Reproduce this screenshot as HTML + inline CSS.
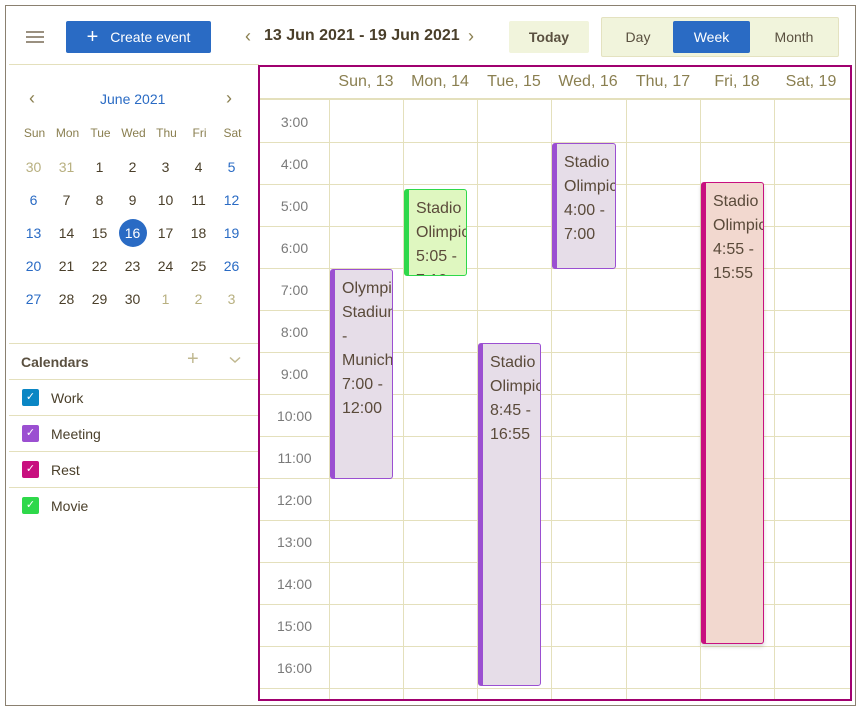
<!DOCTYPE html>
<html><head><meta charset="utf-8"><style>
*{box-sizing:border-box;margin:0;padding:0}
body{width:860px;height:710px;background:#fff;font-family:"Liberation Sans",sans-serif;position:relative;overflow:hidden;color:#4a3f2a}
.a{position:absolute}
.outer{left:5px;top:5px;width:851px;height:701px;border:1px solid #8a8070}
.btn{display:flex;align-items:center;justify-content:center;border-radius:2px;font-size:14px}
.mc{width:33px;text-align:center;font-size:14px}
.hd{font-size:12px;color:#8a7f50}
.o{color:#b8b080}.w{color:#2a6bc4}
.vl{width:1px;background:#e4e0bc}
.hl{height:1px;background:#e4e0bc}
.tl{left:260px;width:69px;text-align:center;font-size:14px;color:#7a7a7a}
.dh{top:73px;width:74px;text-align:center;font-size:16px;color:#8a7f50}
.ev{border:1px solid;border-left-width:5px;border-radius:3px;padding:7px 0 0 7px;font-size:16px;line-height:24px;color:#5a4a3a;overflow:hidden;white-space:nowrap}
.cb{left:22px;width:17px;height:17px;border-radius:2px;color:#fff;font-size:11px;text-align:center;line-height:17px}
.cl{left:51px;font-size:14px}
</style></head><body>
<div class="a outer"></div>
<div class="a" style="left:26px;top:31px;width:18px;height:2px;background:#9a9080;box-shadow:0 5px 0 #9a9080,0 10px 0 #9a9080"></div>
<div class="a btn" style="left:66px;top:21px;width:145px;height:32px;background:#2a6bc4;color:#fff"><span style="font-size:20px;margin-right:12px;line-height:1">+</span>Create event</div>
<div class="a" style="left:245px;top:26px;font-size:18px;color:#8a7f50">‹</div>
<div class="a" style="left:264px;top:27px;font-size:16px;font-weight:bold;color:#4a3f2a">13 Jun 2021 - 19 Jun 2021</div>
<div class="a" style="left:468px;top:26px;font-size:18px;color:#8a7f50">›</div>
<div class="a btn" style="left:509px;top:21px;width:80px;height:32px;background:#f1f4dc;font-weight:bold;color:#5a5040">Today</div>
<div class="a" style="left:601px;top:17px;width:238px;height:40px;background:#f1f4dc;border:1px solid #e4e2c0;border-radius:2px"></div>
<div class="a btn" style="left:605px;top:21px;width:66px;height:32px;color:#5a5040">Day</div>
<div class="a btn" style="left:673px;top:21px;width:77px;height:32px;background:#2a6bc4;color:#fff">Week</div>
<div class="a btn" style="left:752px;top:21px;width:84px;height:32px;color:#5a5040">Month</div>
<div class="a hl" style="left:9px;top:64px;width:250px"></div>
<div class="a" style="left:29px;top:88px;font-size:18px;color:#8a7f50">‹</div>
<div class="a" style="left:226px;top:88px;font-size:18px;color:#8a7f50">›</div>
<div class="a" style="left:100px;top:91px;font-size:14px;color:#2a6bc4">June 2021</div>
<div class="a" style="left:18px;top:126px;display:flex">
<div class="mc hd">Sun</div><div class="mc hd">Mon</div><div class="mc hd">Tue</div><div class="mc hd">Wed</div><div class="mc hd">Thu</div><div class="mc hd">Fri</div><div class="mc hd">Sat</div></div>
<div class="a" style="left:119px;top:219px;width:28px;height:28px;border-radius:50%;background:#2a6bc4"></div>
<div class="a" style="left:17px;top:151px;line-height:33px">
<div style="display:flex"><div class="mc o">30</div><div class="mc o">31</div><div class="mc">1</div><div class="mc">2</div><div class="mc">3</div><div class="mc">4</div><div class="mc w">5</div></div>
<div style="display:flex"><div class="mc w">6</div><div class="mc">7</div><div class="mc">8</div><div class="mc">9</div><div class="mc">10</div><div class="mc">11</div><div class="mc w">12</div></div>
<div style="display:flex"><div class="mc w">13</div><div class="mc">14</div><div class="mc">15</div><div class="mc" style="color:#fff">16</div><div class="mc">17</div><div class="mc">18</div><div class="mc w">19</div></div>
<div style="display:flex"><div class="mc w">20</div><div class="mc">21</div><div class="mc">22</div><div class="mc">23</div><div class="mc">24</div><div class="mc">25</div><div class="mc w">26</div></div>
<div style="display:flex"><div class="mc w">27</div><div class="mc">28</div><div class="mc">29</div><div class="mc">30</div><div class="mc o">1</div><div class="mc o">2</div><div class="mc o">3</div></div>
</div>
<div class="a hl" style="left:9px;top:343px;width:249px"></div>
<div class="a" style="left:21px;top:354px;font-size:14px;font-weight:bold;color:#5a5040">Calendars</div>
<div class="a" style="left:187px;top:348px;font-size:20px;color:#c0b890">+</div>
<svg class="a" style="left:229px;top:356px" width="12" height="8"><path d="M1 1.5 L6 6 L11 1.5" fill="none" stroke="#c0b890" stroke-width="1.5"/></svg>
<div class="a hl" style="left:9px;top:379px;width:249px"></div>
<div class="a hl" style="left:9px;top:415px;width:249px"></div>
<div class="a hl" style="left:9px;top:451px;width:249px"></div>
<div class="a hl" style="left:9px;top:487px;width:249px"></div>
<div class="a cb" style="top:389px;background:#0a86c4">✓</div><div class="a cl" style="top:390px">Work</div>
<div class="a cb" style="top:425px;background:#9b4fd1">✓</div><div class="a cl" style="top:426px">Meeting</div>
<div class="a cb" style="top:461px;background:#c8107f">✓</div><div class="a cl" style="top:462px">Rest</div>
<div class="a cb" style="top:497px;background:#2ed84a">✓</div><div class="a cl" style="top:498px">Movie</div>
<div class="a" style="left:258px;top:65px;width:594px;height:636px;border:2px solid #a0006f"></div>
<div class="a" style="left:260px;top:98px;width:590px;height:2px;background:#e4e0bc"></div>
<div class="a dh" style="left:329px">Sun, 13</div>
<div class="a dh" style="left:403px">Mon, 14</div>
<div class="a dh" style="left:477px">Tue, 15</div>
<div class="a dh" style="left:551px">Wed, 16</div>
<div class="a dh" style="left:626px">Thu, 17</div>
<div class="a dh" style="left:700px">Fri, 18</div>
<div class="a dh" style="left:774px">Sat, 19</div>
<div class="a vl" style="left:329px;top:100px;height:599px"></div>
<div class="a vl" style="left:403px;top:100px;height:599px"></div>
<div class="a vl" style="left:477px;top:100px;height:599px"></div>
<div class="a vl" style="left:551px;top:100px;height:599px"></div>
<div class="a vl" style="left:626px;top:100px;height:599px"></div>
<div class="a vl" style="left:700px;top:100px;height:599px"></div>
<div class="a vl" style="left:774px;top:100px;height:599px"></div>
<div class="a hl" style="left:260px;top:142px;width:590px"></div>
<div class="a hl" style="left:260px;top:184px;width:590px"></div>
<div class="a hl" style="left:260px;top:226px;width:590px"></div>
<div class="a hl" style="left:260px;top:268px;width:590px"></div>
<div class="a hl" style="left:260px;top:310px;width:590px"></div>
<div class="a hl" style="left:260px;top:352px;width:590px"></div>
<div class="a hl" style="left:260px;top:394px;width:590px"></div>
<div class="a hl" style="left:260px;top:436px;width:590px"></div>
<div class="a hl" style="left:260px;top:478px;width:590px"></div>
<div class="a hl" style="left:260px;top:520px;width:590px"></div>
<div class="a hl" style="left:260px;top:562px;width:590px"></div>
<div class="a hl" style="left:260px;top:604px;width:590px"></div>
<div class="a hl" style="left:260px;top:646px;width:590px"></div>
<div class="a hl" style="left:260px;top:688px;width:590px"></div>
<div class="a tl" style="top:114px">3:00</div>
<div class="a tl" style="top:156px">4:00</div>
<div class="a tl" style="top:198px">5:00</div>
<div class="a tl" style="top:240px">6:00</div>
<div class="a tl" style="top:282px">7:00</div>
<div class="a tl" style="top:324px">8:00</div>
<div class="a tl" style="top:366px">9:00</div>
<div class="a tl" style="top:408px">10:00</div>
<div class="a tl" style="top:450px">11:00</div>
<div class="a tl" style="top:492px">12:00</div>
<div class="a tl" style="top:534px">13:00</div>
<div class="a tl" style="top:576px">14:00</div>
<div class="a tl" style="top:618px">15:00</div>
<div class="a tl" style="top:660px">16:00</div>
<div class="a ev" style="left:330px;top:269px;width:63px;height:210px;background:#e6dde8;border-color:#9b4fd1">Olympic<br>Stadium<br>-<br>Munich<br>7:00 -<br>12:00</div>
<div class="a ev" style="left:404px;top:189px;width:63px;height:87px;background:#dff7c0;border-color:#2ed84a">Stadio<br>Olimpico<br>5:05 -<br>7:10</div>
<div class="a ev" style="left:478px;top:343px;width:63px;height:343px;background:#e6dde8;border-color:#9b4fd1">Stadio<br>Olimpico<br>8:45 -<br>16:55</div>
<div class="a ev" style="left:552px;top:143px;width:64px;height:126px;background:#e6dde8;border-color:#9b4fd1">Stadio<br>Olimpico<br>4:00 -<br>7:00</div>
<div class="a ev" style="left:701px;top:182px;width:63px;height:462px;background:#f2d8cf;border-color:#c8107f;box-shadow:0 3px 4px rgba(0,0,0,.15)">Stadio<br>Olimpico<br>4:55 -<br>15:55</div>
</body></html>
